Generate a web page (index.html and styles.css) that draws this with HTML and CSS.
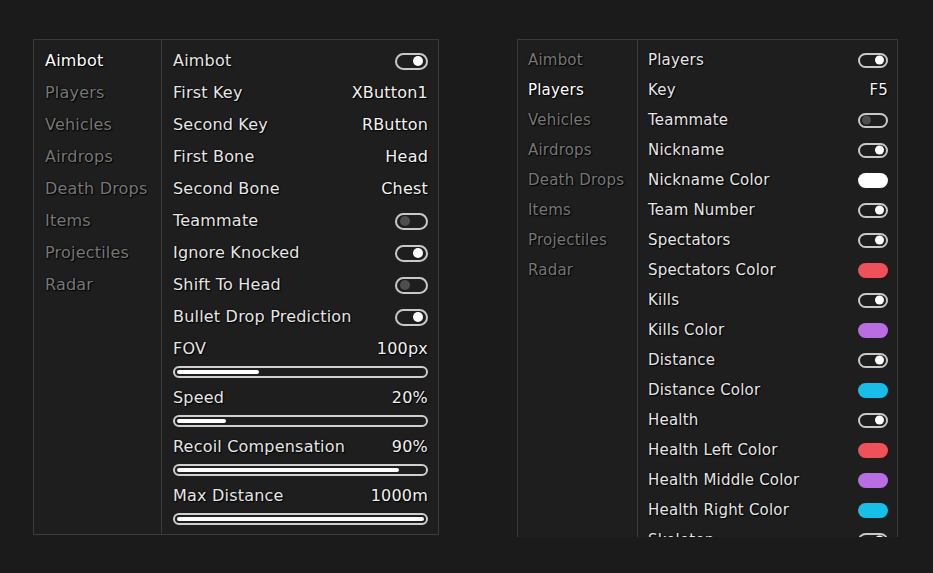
FILE: index.html
```html
<!DOCTYPE html>
<html>
<head>
<meta charset="utf-8">
<link rel="stylesheet" href="styles.css">
</head>
<body>
<div class="page">
  <div class="panel panel-left">
    <div class="side">
      <div class="side-item active">Aimbot</div>
      <div class="side-item">Players</div>
      <div class="side-item">Vehicles</div>
      <div class="side-item">Airdrops</div>
      <div class="side-item">Death Drops</div>
      <div class="side-item">Items</div>
      <div class="side-item">Projectiles</div>
      <div class="side-item">Radar</div>
    </div>
    <div class="content">
      <div class="row"><span>Aimbot</span><span class="toggle on"></span></div>
      <div class="row"><span>First Key</span><span class="val">XButton1</span></div>
      <div class="row"><span>Second Key</span><span class="val">RButton</span></div>
      <div class="row"><span>First Bone</span><span class="val">Head</span></div>
      <div class="row"><span>Second Bone</span><span class="val">Chest</span></div>
      <div class="row"><span>Teammate</span><span class="toggle"></span></div>
      <div class="row"><span>Ignore Knocked</span><span class="toggle on"></span></div>
      <div class="row"><span>Shift To Head</span><span class="toggle"></span></div>
      <div class="row"><span>Bullet Drop Prediction</span><span class="toggle on"></span></div>
      <div class="slider-block">
        <div class="row"><span>FOV</span><span class="val">100px</span></div>
        <div class="track"><div class="fill" style="width:33%"></div></div>
      </div>
      <div class="slider-block">
        <div class="row"><span>Speed</span><span class="val">20%</span></div>
        <div class="track"><div class="fill" style="width:20%"></div></div>
      </div>
      <div class="slider-block">
        <div class="row"><span>Recoil Compensation</span><span class="val">90%</span></div>
        <div class="track"><div class="fill" style="width:90%"></div></div>
      </div>
      <div class="slider-block">
        <div class="row"><span>Max Distance</span><span class="val">1000m</span></div>
        <div class="track"><div class="fill" style="width:100%"></div></div>
      </div>
    </div>
  </div>

  <div class="panel panel-right">
    <div class="side">
      <div class="side-item">Aimbot</div>
      <div class="side-item active">Players</div>
      <div class="side-item">Vehicles</div>
      <div class="side-item">Airdrops</div>
      <div class="side-item">Death Drops</div>
      <div class="side-item">Items</div>
      <div class="side-item">Projectiles</div>
      <div class="side-item">Radar</div>
    </div>
    <div class="content">
      <div class="row"><span>Players</span><span class="toggle on"></span></div>
      <div class="row"><span>Key</span><span class="val">F5</span></div>
      <div class="row"><span>Teammate</span><span class="toggle"></span></div>
      <div class="row"><span>Nickname</span><span class="toggle on"></span></div>
      <div class="row"><span>Nickname Color</span><span class="swatch white"></span></div>
      <div class="row"><span>Team Number</span><span class="toggle on"></span></div>
      <div class="row"><span>Spectators</span><span class="toggle on"></span></div>
      <div class="row"><span>Spectators Color</span><span class="swatch red"></span></div>
      <div class="row"><span>Kills</span><span class="toggle on"></span></div>
      <div class="row"><span>Kills Color</span><span class="swatch purple"></span></div>
      <div class="row"><span>Distance</span><span class="toggle on"></span></div>
      <div class="row"><span>Distance Color</span><span class="swatch cyan"></span></div>
      <div class="row"><span>Health</span><span class="toggle on"></span></div>
      <div class="row"><span>Health Left Color</span><span class="swatch red"></span></div>
      <div class="row"><span>Health Middle Color</span><span class="swatch purple"></span></div>
      <div class="row"><span>Health Right Color</span><span class="swatch cyan"></span></div>
      <div class="row"><span>Skeleton</span><span class="toggle on"></span></div>
    </div>
  </div>
</div>
</body>
</html>
```

FILE: styles.css
```css
html, body {
  margin: 0;
  padding: 0;
  background: #1b1b1b;
}
body {
  width: 933px;
  height: 573px;
  overflow: hidden;
  font-family: "DejaVu Sans", Tahoma, sans-serif;
  color: #e6e6e6;
  letter-spacing: 0.2px;
}
.page {
  display: flex;
  align-items: flex-start;
  padding: 39px 0 0 33px;
  gap: 78px;
}
.panel {
  display: flex;
  background: #1e1e1e;
  border: 1px solid #3a3a3a;
  box-sizing: border-box;
  text-shadow: 0 0 2px #000, 1px 1px 1px #000;
}
.panel-left {
  width: 406px;
  height: 496px;
  font-size: 16px;
}
.panel-right {
  width: 381px;
  height: 498px;
  border-bottom: none;
  overflow: hidden;
  font-size: 15px;
}
.side {
  border-right: 1px solid #3a3a3a;
  box-sizing: border-box;
  padding-top: 5px;
}
.panel-left .side { width: 128px; padding-left: 11px; }
.panel-right .side { width: 120px; padding-left: 10px; }
.side-item {
  color: #777;
}
.side-item.active { color: #fff; }
.panel-left .side-item, .panel-left .row { height: 32px; line-height: 32px; }
.panel-right .side-item, .panel-right .row { height: 30px; line-height: 30px; }
.content {
  flex: 1;
  padding-top: 5px;
  box-sizing: border-box;
}
.panel-left .content { padding-left: 11px; padding-right: 10px; }
.panel-right .content { padding-left: 10px; padding-right: 9px; }
.row {
  display: flex;
  justify-content: space-between;
  align-items: center;
  white-space: nowrap;
}
.val { color: #f2f2f2; }
.toggle {
  position: relative;
  box-sizing: border-box;
  border: 2px solid #c8c8c8;
  border-radius: 10px;
}
.panel-left .toggle { width: 33px; height: 17px; }
.panel-right .toggle { width: 30px; height: 15px; }
.toggle::after {
  content: "";
  position: absolute;
  top: 50%;
  transform: translateY(-50%);
  width: 10px;
  height: 10px;
  border-radius: 50%;
  background: #4e4e4e;
  left: 3px;
}
.panel-right .toggle::after { width: 9px; height: 9px; left: 2px; }
.toggle.on::after { background: #fff; left: auto; right: 3px; }
.panel-right .toggle.on::after { right: 2px; }
.swatch {
  width: 30px;
  height: 15px;
  border-radius: 8px;
}
.swatch.white { background: #ffffff; }
.swatch.red { background: #f0505a; }
.swatch.purple { background: #b86de2; }
.swatch.cyan { background: #17bfe8; }
.slider-block { padding-bottom: 4px; }
.track {
  margin-top: 1px;
  height: 12px;
  box-sizing: border-box;
  border: 2px solid #cfcfcf;
  border-radius: 6px;
  padding: 2px;
}
.fill {
  height: 4px;
  background: #fff;
  border-radius: 2px;
}
```
